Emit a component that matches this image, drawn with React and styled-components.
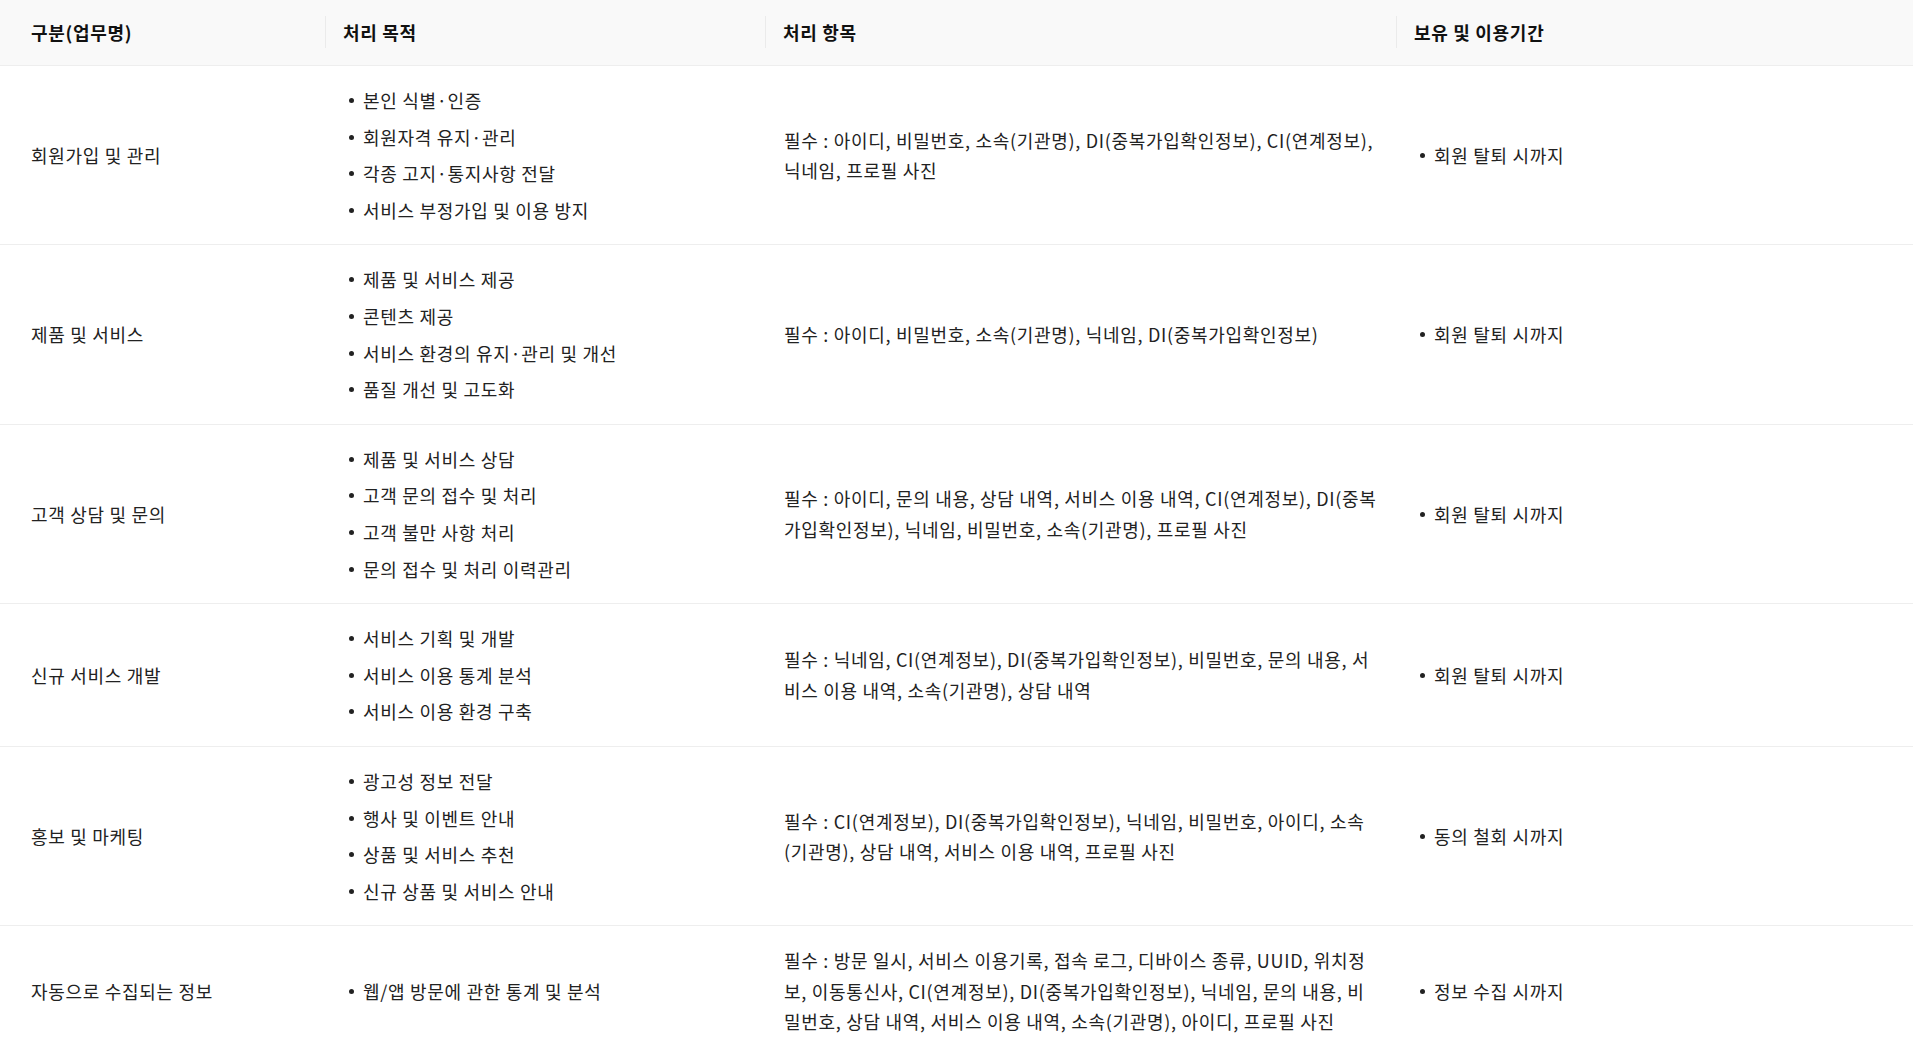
import React from 'react';
import styled, { createGlobalStyle } from 'styled-components';

const GlobalStyle = createGlobalStyle`
    body {
        margin: 0;
        background: #ffffff;
        font-family: "Noto Sans CJK KR", "Noto Sans", sans-serif;
        color: #222222;
    }
`;

const Table = styled.table`
    width: 1913px;
    border-collapse: collapse;
    table-layout: fixed;
    font-size: 18px;
    line-height: 30.6px;
    letter-spacing: 0.7px;
`;

const HeadRow = styled.tr`
    background: #f9f9f9;
    border-bottom: 1px solid #eeeeee;
`;

const HeadCell = styled.th`
    position: relative;
    height: 65px;
    padding: 0 18px 0 ${({ $first }) => ($first ? '31px' : '18px')};
    text-align: left;
    font-weight: 700;
    color: #111111;
    vertical-align: middle;

    &::before {
        content: ${({ $first }) => ($first ? 'none' : "''")};
        position: absolute;
        left: 0;
        top: 16px;
        width: 1px;
        height: 32px;
        background: #ebebeb;
    }
`;

const Row = styled.tr`
    border-bottom: 1px solid #eeeeee;
`;

const Cell = styled.td`
    padding: 19px 16px 19px ${({ $first }) => ($first ? '31px' : '19px')};
    vertical-align: middle;
    word-break: break-all;
`;

const List = styled.ul`
    margin: 0;
    padding: 0;
    list-style: none;
    display: flex;
    flex-direction: column;
    gap: 6px;
`;

const Item = styled.li`
    position: relative;
    padding-left: 19px;

    &::before {
        content: '';
        position: absolute;
        left: 5px;
        top: 13px;
        width: 5px;
        height: 5px;
        border-radius: 50%;
        background: #222222;
    }
`;

const columns = [
    { title: '구분(업무명)', width: 325 },
    { title: '처리 목적', width: 440 },
    { title: '처리 항목', width: 631 },
    { title: '보유 및 이용기간', width: 517 },
];

const rows = [
    {
        name: '회원가입 및 관리',
        purposes: ['본인 식별·인증', '회원자격 유지·관리', '각종 고지·통지사항 전달', '서비스 부정가입 및 이용 방지'],
        items: '필수 : 아이디, 비밀번호, 소속(기관명), DI(중복가입확인정보), CI(연계정보), 닉네임, 프로필 사진',
        period: '회원 탈퇴 시까지',
    },
    {
        name: '제품 및 서비스',
        purposes: ['제품 및 서비스 제공', '콘텐츠 제공', '서비스 환경의 유지·관리 및 개선', '품질 개선 및 고도화'],
        items: '필수 : 아이디, 비밀번호, 소속(기관명), 닉네임, DI(중복가입확인정보)',
        period: '회원 탈퇴 시까지',
    },
    {
        name: '고객 상담 및 문의',
        purposes: ['제품 및 서비스 상담', '고객 문의 접수 및 처리', '고객 불만 사항 처리', '문의 접수 및 처리 이력관리'],
        items: '필수 : 아이디, 문의 내용, 상담 내역, 서비스 이용 내역, CI(연계정보), DI(중복가입확인정보), 닉네임, 비밀번호, 소속(기관명), 프로필 사진',
        period: '회원 탈퇴 시까지',
    },
    {
        name: '신규 서비스 개발',
        purposes: ['서비스 기획 및 개발', '서비스 이용 통계 분석', '서비스 이용 환경 구축'],
        items: '필수 : 닉네임, CI(연계정보), DI(중복가입확인정보), 비밀번호, 문의 내용, 서비스 이용 내역, 소속(기관명), 상담 내역',
        period: '회원 탈퇴 시까지',
    },
    {
        name: '홍보 및 마케팅',
        purposes: ['광고성 정보 전달', '행사 및 이벤트 안내', '상품 및 서비스 추천', '신규 상품 및 서비스 안내'],
        items: '필수 : CI(연계정보), DI(중복가입확인정보), 닉네임, 비밀번호, 아이디, 소속(기관명), 상담 내역, 서비스 이용 내역, 프로필 사진',
        period: '동의 철회 시까지',
    },
    {
        name: '자동으로 수집되는 정보',
        purposes: ['웹/앱 방문에 관한 통계 및 분석'],
        items: '필수 : 방문 일시, 서비스 이용기록, 접속 로그, 디바이스 종류, UUID, 위치정보, 이동통신사, CI(연계정보), DI(중복가입확인정보), 닉네임, 문의 내용, 비밀번호, 상담 내역, 서비스 이용 내역, 소속(기관명), 아이디, 프로필 사진',
        period: '정보 수집 시까지',
    },
];

export default function App() {
    return (
        <>
            <GlobalStyle />
            <Table>
                <colgroup>
                    {columns.map((c) => <col key={c.title} style={{ width: c.width }} />)}
                </colgroup>
                <thead>
                    <HeadRow>
                        {columns.map((c, i) => (
                            <HeadCell key={c.title} $first={i === 0}>{c.title}</HeadCell>
                        ))}
                    </HeadRow>
                </thead>
                <tbody>
                    {rows.map((r) => (
                        <Row key={r.name}>
                            <Cell $first>{r.name}</Cell>
                            <Cell>
                                <List>
                                    {r.purposes.map((p) => <Item key={p}>{p}</Item>)}
                                </List>
                            </Cell>
                            <Cell>{r.items}</Cell>
                            <Cell>
                                <List>
                                    <Item>{r.period}</Item>
                                </List>
                            </Cell>
                        </Row>
                    ))}
                </tbody>
            </Table>
        </>
    );
}
